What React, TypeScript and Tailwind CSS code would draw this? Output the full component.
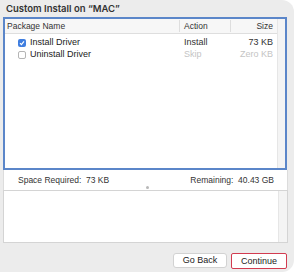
import React from 'react'

const App: React.FC = () => {
  const rows = [
    { name: 'Install Driver', action: 'Install', size: '73 KB', checked: true },
    { name: 'Uninstall Driver', action: 'Skip', size: 'Zero KB', checked: false },
  ]

  return (
    <div className="w-[300px] h-[272px] bg-white overflow-hidden" style={{ fontFamily: '"Liberation Sans", Arial, sans-serif' }}>
      <div className="w-[294px] h-[272px] bg-[#ececec] rounded-r-[12px] flex flex-col">
        <div
          className="h-[17px] pl-[6px] pt-[3px] text-[9.5px] font-semibold text-[#333] leading-[12px]"
          style={{ fontFamily: 'Inter, "Noto Sans", sans-serif' }}
        >
          Custom Install on “MAC”
        </div>

        <div className="ml-[3px] mr-[7px] h-[153px] border-2 border-[#5b86c9] bg-white flex">
          <div className="flex-1 flex flex-col">
            <div className="h-[15px] flex items-center text-[8.5px] text-[#333] bg-[#f7f7f7] border-b border-[#dedede]">
              <div className="flex-1 pl-[2px]">Package Name</div>
              <div className="w-[51px] pl-[4px] border-l border-[#dedede]">Action</div>
              <div className="w-[47px] pr-[4px] text-right border-l border-[#dedede]">Size</div>
            </div>
            <div className="h-[3px]" />
            {rows.map((r) => (
              <div key={r.name} className="h-[12px] flex items-center text-[9px]">
                <div className="flex-1 flex items-center pl-[13px] gap-[4px] text-[#222]">
                  {r.checked ? (
                    <span className="w-[8px] h-[8px] rounded-[2px] bg-[#3f7ee0] flex items-center justify-center">
                      <svg width="6" height="6" viewBox="0 0 6 6">
                        <path d="M1 3.2 L2.4 4.6 L5 1.4" stroke="white" strokeWidth="1.2" fill="none" />
                      </svg>
                    </span>
                  ) : (
                    <span className="w-[8px] h-[8px] rounded-[2px] border border-[#b5b5b5] bg-white" />
                  )}
                  <span>{r.name}</span>
                </div>
                <div className={`w-[51px] pl-[5px] ${r.checked ? 'text-[#333]' : 'text-[#c4c4c4]'}`}>{r.action}</div>
                <div className={`w-[47px] pr-[4px] text-right whitespace-nowrap ${r.checked ? 'text-[#333]' : 'text-[#c4c4c4]'}`}>{r.size}</div>
              </div>
            ))}
          </div>
          <div className="w-[8px] bg-[#f4f4f4] border-l border-[#e6e6e6]" />
        </div>

        <div className="ml-[3px] mr-[6px] bg-white border-x border-[#dcdcdc] h-[20px] flex items-center justify-between pl-[14px] pr-[13px] text-[8.5px] text-[#333] relative">
          <span>Space Required:&nbsp;&nbsp;73 KB</span>
          <span>Remaining:&nbsp;&nbsp;40.43 GB</span>
          <span className="absolute left-[142px] bottom-[1px] w-[3px] h-[3px] rounded-full bg-[#b8b8b8]" />
        </div>

        <div className="ml-[3px] mr-[6px] h-[53px] bg-white border border-[#d4d4d4] flex">
          <div className="flex-1" />
          <div className="w-[9px] bg-[#f4f4f4] border-l border-[#e6e6e6]" />
        </div>

        <div className="flex justify-end gap-[4px] pr-[7px] pt-[10px]">
          <button className="w-[54px] h-[15px] bg-white rounded-[3px] border border-[#d2d2d2] text-[9px] text-[#222] leading-none">
            Go Back
          </button>
          <button className="w-[56px] h-[16px] bg-white rounded-[2px] border-[1.5px] border-[#d23b50] text-[9px] text-[#222] leading-none">
            Continue
          </button>
        </div>
      </div>
    </div>
  )
}

export default App
